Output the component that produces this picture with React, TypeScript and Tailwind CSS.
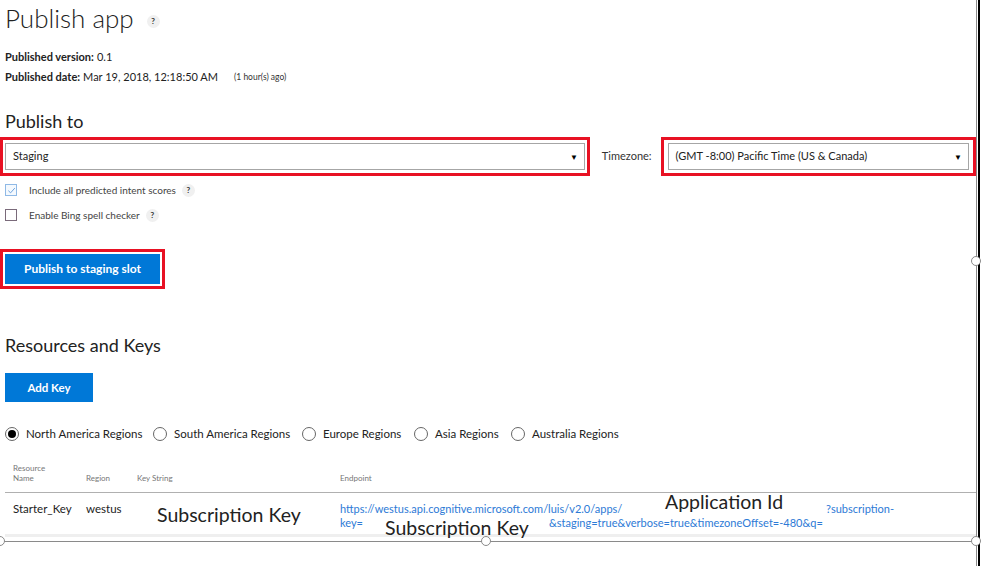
import React from "react";

const Help = ({ className = "" }: { className?: string }) => (
  <span
    className={
      "inline-flex items-center justify-center w-[13px] h-[13px] rounded-full bg-[#f0f0f0] text-[8px] font-bold text-[#333] leading-none " +
      className
    }
  >
    ?
  </span>
);

const Radio = ({ checked = false, label, w }: { checked?: boolean; label: string; w: string }) => (
  <div className={"flex items-center gap-[7px] " + w}>
    <span className="w-[14px] h-[14px] rounded-full border border-[#666] bg-white flex items-center justify-center">
      {checked && <span className="w-[8px] h-[8px] rounded-full bg-black" />}
    </span>
    <span className="text-[11.5px] text-[#222] whitespace-nowrap">{label}</span>
  </div>
);

const Caret = () => <span className="text-[8px] text-black leading-none">▼</span>;

export default function App() {
  return (
    <div
      className="relative w-[981px] h-[566px] bg-white overflow-hidden text-[#222]"
      style={{ fontFamily: 'Lato, "Open Sans", sans-serif' }}
    >
      <div className="w-[976px] pl-[5px]">
        {/* Title */}
        <div className="h-[36px] flex items-center gap-[13px]">
          <span className="text-[26px] font-light leading-none text-[#222]">Publish app</span>
          <Help className="mt-[6px]" />
        </div>

        <div className="mt-[11px] h-[20px] flex items-center text-[11px]">
          <span className="font-bold">Published version:</span>
          <span className="ml-[3px]">0.1</span>
        </div>
        <div className="h-[20px] flex items-center text-[11px]">
          <span className="font-bold">Published date:</span>
          <span className="ml-[3px]">Mar 19, 2018, 12:18:50 AM</span>
          <span className="ml-[16px] text-[8.5px] text-[#333]">(1 hour(s) ago)</span>
        </div>

        <div className="mt-[22px] h-[24px] flex items-center text-[18px] text-[#222]">Publish to</div>

        {/* Publish to row */}
        <div className="mt-[4px] -ml-[5px] flex items-center">
          <div className="w-[591px] border-[3px] border-[#e81123] px-[2px] py-[3px]">
            <div className="h-[27px] border border-[#a6a6a6] flex items-center justify-between pl-[7px] pr-[6px] text-[11px]">
              <span>Staging</span>
              <Caret />
            </div>
          </div>
          <span className="ml-[12px] text-[11px] text-[#333]">Timezone:</span>
          <div className="ml-[9px] w-[316px] border-[3px] border-[#e81123] px-[4px] py-[3px]">
            <div className="h-[27px] border border-[#a6a6a6] flex items-center justify-between pl-[7px] pr-[6px] text-[11px]">
              <span>(GMT -8:00) Pacific Time (US &amp; Canada)</span>
              <Caret />
            </div>
          </div>
        </div>

        {/* Checkboxes */}
        <div className="mt-[7px] h-[14px] flex items-center">
          <span className="w-[12px] h-[12px] border border-[#8fb9e6] bg-[#f4f9fe] flex items-center justify-center">
            <svg width="9" height="9" viewBox="0 0 10 10">
              <path d="M1.5 5.2 L4 7.6 L8.7 2.3" fill="none" stroke="#5d98da" strokeWidth="1" />
            </svg>
          </span>
          <span className="ml-[12px] text-[10px] text-[#444]">Include all predicted intent scores</span>
          <Help className="ml-[6px]" />
        </div>
        <div className="mt-[11px] h-[14px] flex items-center">
          <span className="w-[12px] h-[12px] border border-[#7a6a7a] bg-white" />
          <span className="ml-[12px] text-[10px] text-[#444]">Enable Bing spell checker</span>
          <Help className="ml-[6px]" />
        </div>

        {/* Publish button */}
        <div className="mt-[27px] -ml-[5px] w-[165px] border-[3px] border-[#e81123] p-[2px]">
          <div className="h-[30px] bg-[#0078d7] flex items-center justify-center text-white text-[12px] font-bold">
            Publish to staging slot
          </div>
        </div>

        <div className="mt-[44px] h-[24px] flex items-center text-[18px] text-[#222]">Resources and Keys</div>

        <div className="mt-[16px] w-[88px] h-[29px] bg-[#0078d7] flex items-center justify-center text-white text-[11.5px] font-bold">
          Add Key
        </div>

        {/* Regions */}
        <div className="mt-[23px] h-[18px] flex items-center">
          <Radio checked label="North America Regions" w="w-[148px]" />
          <Radio label="South America Regions" w="w-[149px]" />
          <Radio label="Europe Regions" w="w-[112px]" />
          <Radio label="Asia Regions" w="w-[97px]" />
          <Radio label="Australia Regions" w="w-[120px]" />
        </div>

        {/* Table */}
        <div className="mt-[17px] h-[33px] border-b border-[#b0b0b0] flex items-end pb-[9px] text-[8px] text-[#777] leading-[10px]">
          <div className="w-[81px] pl-[8px]">
            Resource
            <br />
            Name
          </div>
          <div className="w-[51px]">Region</div>
          <div className="w-[203px]">Key String</div>
          <div>Endpoint</div>
        </div>
        <div className="h-[44px] border-b-[3px] border-[#efefef] flex pt-[9px] text-[11.5px] leading-[14px]">
          <div className="w-[81px] pl-[8px]">Starter_Key</div>
          <div className="w-[254px]">westus</div>
          <div className="text-[11px] text-[#2d7ad6] leading-[14px]">
            <div className="flex">
              <span className="w-[283px] whitespace-nowrap">
                https://westus.api.cognitive.microsoft.com/luis/v2.0/apps/
              </span>
              <span className="ml-[203px]">?subscription-</span>
            </div>
            <div className="flex">
              <span className="w-[209px]">key=</span>
              <span>&amp;staging=true&amp;verbose=true&amp;timezoneOffset=-480&amp;q=</span>
            </div>
          </div>
        </div>
      </div>

      {/* Annotation labels */}
      <span className="absolute left-[157px] top-[502px] text-[19.5px] leading-[26px] text-[#222]">Subscription Key</span>
      <span className="absolute left-[385px] top-[515px] text-[19.5px] leading-[26px] text-[#222]">Subscription Key</span>
      <span className="absolute left-[665px] top-[489px] text-[19.5px] leading-[26px] text-[#222]">Application Id</span>

      {/* Selection frame */}
      <div className="absolute left-[976px] top-0 w-px h-[566px] bg-[#8a8a8a]" />
      <div className="absolute left-[978px] top-0 w-[2px] h-[566px] bg-black" />
      <div className="absolute left-0 top-[541px] w-[976px] h-px bg-[#8a8a8a]" />
      {[
        [976, 261],
        [0, 541],
        [486, 541],
        [976, 541],
      ].map(([x, y], i) => (
        <span
          key={i}
          className="absolute w-[10px] h-[10px] rounded-full border-[1.5px] border-[#8a8a8a] bg-white"
          style={{ left: x - 5, top: y - 5 }}
        />
      ))}
    </div>
  );
}
